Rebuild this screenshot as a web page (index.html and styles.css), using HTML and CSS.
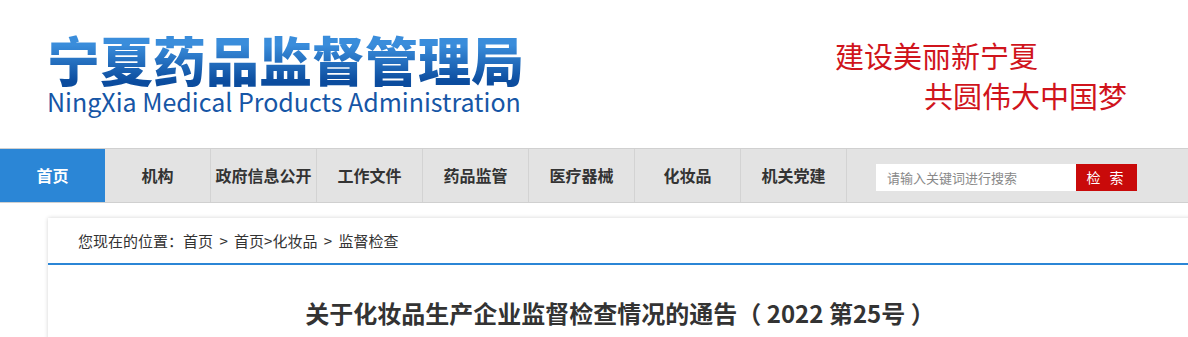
FILE: index.html
```html
<!DOCTYPE html>
<html lang="zh-CN">
<head>
    <meta charset="UTF-8">
    <meta name="viewport" content="width=device-width, initial-scale=1.0">
    <title>宁夏药品监督管理局</title>
    <link rel="stylesheet" href="styles.css">
</head>
<body>
    <div class="header">
        <div class="logo">
            <div class="logo-cn">宁夏药品监督管理局</div>
            <div class="logo-en">NingXia Medical Products Administration</div>
        </div>
        <div class="slogan">
            <div class="slogan-line">建设美丽新宁夏</div>
            <div class="slogan-line indent">共圆伟大中国梦</div>
        </div>
    </div>

    <div class="nav">
        <a class="nav-item active" href="#">首页</a>
        <a class="nav-item" href="#">机构</a>
        <a class="nav-item" href="#">政府信息公开</a>
        <a class="nav-item" href="#">工作文件</a>
        <a class="nav-item" href="#">药品监管</a>
        <a class="nav-item" href="#">医疗器械</a>
        <a class="nav-item" href="#">化妆品</a>
        <a class="nav-item" href="#">机关党建</a>
        <div class="search">
            <input type="text" class="search-input" placeholder="请输入关键词进行搜索">
            <button class="search-btn">检 索</button>
        </div>
    </div>

    <div class="main">
        <div class="crumbs">
            您现在的位置：<a href="#">首页</a> &gt; <a href="#">首页</a>&gt;<a href="#">化妆品</a> &gt; <a href="#">监督检查</a>
        </div>
        <h1 class="title">关于化妆品生产企业监督检查情况的通告（ 2022 第25号 ）</h1>
    </div>
</body>
</html>
```

FILE: styles.css
```css
body {
    margin: 0;
    padding: 0;
    background-color: #ffffff;
    font-family: "Noto Sans CJK SC", "Liberation Sans", sans-serif;
    color: #333333;
    overflow: hidden;
}
a {
    color: inherit;
    text-decoration: none;
}
.header {
    height: 148px;
    display: flex;
    justify-content: space-between;
    padding: 0 61px 0 47px;
}
.logo {
    padding-top: 31px;
}
.logo-cn {
    font-size: 53px;
    font-weight: 900;
    line-height: 56px;
    background: linear-gradient(to bottom, #3a8ddb 25%, #0b4c9e 90%);
    -webkit-background-clip: text;
    background-clip: text;
    color: transparent;
}
.logo-en {
    margin-top: 3px;
    font-size: 25px;
    line-height: 22px;
    color: #1656a6;
}
.slogan {
    padding-top: 35px;
    color: #d0141c;
    font-size: 29px;
    line-height: 40px;
}
.slogan-line.indent {
    padding-left: 89px;
}
.nav {
    display: flex;
    align-items: center;
    height: 53px;
    background-color: #e3e3e3;
    border-top: 1px solid #d0d0d0;
    border-bottom: 1px solid #d0d0d0;
}
.nav-item {
    width: 105px;
    height: 53px;
    line-height: 53px;
    text-align: center;
    font-size: 16px;
    font-weight: 700;
    color: #333333;
    border-right: 1px solid #d3d3d3;
}
.nav-item.active {
    background-color: #2b86d6;
    color: #ffffff;
    border-right: none;
}
.search {
    display: flex;
    margin-left: 29px;
    margin-top: 3px;
}
.search-input {
    width: 200px;
    height: 27px;
    box-sizing: border-box;
    border: none;
    outline: none;
    padding: 0 11px;
    font-family: inherit;
    font-size: 13px;
    color: #333333;
    background-color: #ffffff;
}
.search-input::placeholder {
    color: #888888;
}
.search-btn {
    width: 61px;
    height: 27px;
    border: none;
    padding: 0;
    background-color: #c90a0a;
    color: #ffffff;
    font-family: inherit;
    font-size: 14px;
    letter-spacing: 3px;
    cursor: pointer;
}
.main {
    margin: 15px 0 0 48px;
    width: 1160px;
    background-color: #ffffff;
    box-shadow: 0 0 4px rgba(0, 0, 0, 0.18);
    min-height: 200px;
}
.crumbs {
    height: 45px;
    line-height: 45px;
    padding-left: 30px;
    font-size: 15px;
    word-spacing: 3px;
    color: #333333;
    border-bottom: 2px solid #2b86d6;
}
.title {
    margin: 0;
    padding: 30px 16px 0 0;
    font-size: 24px;
    font-weight: 700;
    line-height: 36px;
    text-align: center;
    color: #333333;
}
```
